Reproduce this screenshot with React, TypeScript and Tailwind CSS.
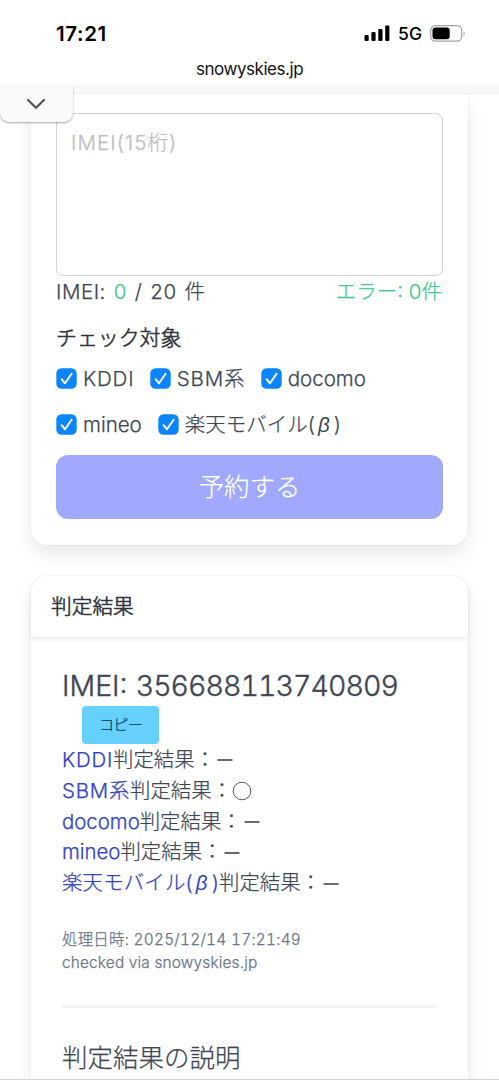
import type { ReactNode } from "react";

function StatusBar() {
  return (
    <div className="flex h-[54px] items-end justify-between pr-[33px] pl-[56px]">
      <span className="h-[32px] font-[Inter] text-[20.5px] leading-[24px] font-semibold tracking-[0.6px] text-black">17:21</span>
      <div className="flex h-[32px] items-start">
        <svg className="mt-[3px] mr-[8px]" width="26" height="17" viewBox="0 0 26 17" fill="#000">
          <rect x="0.5" y="10" width="4.2" height="6" rx="1.1" />
          <rect x="7.4" y="7" width="4.2" height="9" rx="1.1" />
          <rect x="14.3" y="4" width="4.2" height="12" rx="1.1" />
          <rect x="21.2" y="0.5" width="4.2" height="15.5" rx="1.1" />
        </svg>
        <span className="mr-[8px] font-[Inter] text-[17.5px] leading-[24px] font-medium text-black">5G</span>
        <svg className="mt-[3px]" width="36" height="17" viewBox="0 0 36 17" fill="none">
          <rect x="0.7" y="0.7" width="31" height="15.4" rx="4.6" stroke="#a3a3a3" strokeWidth="1.2" />
          <rect x="2.5" y="2.5" width="17.2" height="11.8" rx="3" fill="#000" />
          <path d="M33.6 6v5c1.3-.5 1.3-4.5 0-5Z" fill="#999" />
        </svg>
      </div>
    </div>
  );
}

function Check({ children, className = "" }: { children: ReactNode; className?: string }) {
  return (
    <label className="flex items-center">
      <svg className="mr-[6px]" width="21" height="21" viewBox="0 0 21 21" fill="none">
        <rect x="0.3" y="0.3" width="20.4" height="20.4" rx="5.3" fill="#0a84ff" />
        <path d="m5.6 11.2 3.4 4.1 6.6-9.6" stroke="#fff" strokeWidth="2" strokeLinecap="round" strokeLinejoin="round" />
      </svg>
      <span className={className}>{children}</span>
    </label>
  );
}

function Result({ name, mark, nameClass = "" }: { name: ReactNode; mark: ReactNode; nameClass?: string }) {
  return (
    <div className="flex h-[30.8px] items-center text-[20.4px] leading-[30.8px] whitespace-nowrap">
      <span className={`text-[#3142c4] ${nameClass}`}>{name}</span>
      <span>判定結果：</span>
      {mark}
    </div>
  );
}

const dash = (
  <svg className="ml-[2px]" width="16" height="4" viewBox="0 0 16 4">
    <path d="M0.5 2h15" stroke="#404654" strokeWidth="1.6" />
  </svg>
);
const circle = (
  <svg width="20" height="20" viewBox="0 0 20 20">
    <circle cx="10" cy="10" r="8.8" fill="none" stroke="#555a66" strokeWidth="1" />
  </svg>
);
const beta = <i className="pr-[4px] pl-[3px] font-['Liberation_Sans'] [-webkit-text-stroke:0]">β</i>;

export default function App() {
  return (
    <div className="relative flex h-[1080px] w-[499px] flex-col overflow-hidden bg-white font-['Inter','Noto_Sans_CJK_JP',sans-serif] font-light text-[#404654] [-webkit-text-stroke:0.25px]">
      <header className="h-[85px] shrink-0 bg-white [-webkit-text-stroke:0]">
        <StatusBar />
        <div className="pt-[3px] text-center font-[Inter] text-[17px] leading-[24px] font-normal tracking-[-0.45px] text-[#111]">snowyskies.jp</div>
      </header>
      <div className="relative z-10 h-[8px] shrink-0 bg-[#f8f8f8] shadow-[0_1px_2px_rgba(0,0,0,0.08)]">
        <div className="absolute top-0 left-0 flex h-[37px] w-[73px] items-center justify-center rounded-b-[9px] bg-[#fafafa] shadow-[0_1px_2px_rgba(0,0,0,0.35)]">
          <svg className="-ml-[2px]" width="20" height="12" viewBox="0 0 20 12" fill="none">
            <path d="m2 2 8 7.8L18 2" stroke="#555" strokeWidth="2.3" strokeLinecap="round" strokeLinejoin="round" />
          </svg>
        </div>
      </div>

      <main className="flex flex-col px-[31px]">
        <section className="h-[452px] shrink-0 rounded-b-[16px] bg-white px-[25px] pt-[20px] shadow-[0_10px_20px_-2px_rgba(10,10,10,0.1),0_0_0_1px_rgba(10,10,10,0.02)]">
          <div className="h-[163px] w-[387px] rounded-[7px] border border-[#d2d3d6] px-[14px] pt-[13px] text-[20.5px] leading-[31px] tracking-[1.1px] text-[#bdbdbf]">IMEI(15桁)</div>
          <div className="flex h-[31px] w-[386px] justify-between text-[20.5px] leading-[31px]">
            <span className="tracking-[0.55px] [word-spacing:1.5px]">IMEI: <span className="text-[#48c78e]">0</span> / 20 件</span>
            <span className="text-[#48c78e]">エラー: 0件</span>
          </div>
          <div className="mt-[15px] h-[31px] text-[20.9px] leading-[31px] text-[#2e333d] [-webkit-text-stroke:0.6px]">チェック対象</div>
          <div className="mt-[10px] flex h-[31px] gap-[15.5px] text-[20.5px] leading-[31px]">
            <Check className="tracking-[0.8px]">KDDI</Check>
            <Check className="tracking-[0.8px]">SBM系</Check>
            <Check>docomo</Check>
          </div>
          <div className="mt-[15px] flex h-[31px] gap-[16px] text-[20.5px] leading-[31px]">
            <Check>mineo</Check>
            <Check>楽天モバイル({beta})</Check>
          </div>
          <button className="mt-[15px] block h-[64px] w-[387px] rounded-[12px] bg-[#a0a9fd] text-[25.4px] leading-[62px] text-white">予約する</button>
        </section>

        <section className="mt-[31px] h-[600px] shrink-0 rounded-[16px] bg-white shadow-[0_10px_20px_-2px_rgba(10,10,10,0.1),0_0_0_1px_rgba(10,10,10,0.02)]">
          <div className="h-[61px] rounded-t-[16px] px-[20px] text-[20.7px] leading-[61px] text-[#2e333d] shadow-[0_2px_4px_rgba(10,10,10,0.1)] [-webkit-text-stroke:0.6px]">判定結果</div>
          <div className="px-[31px] pt-[26px]">
            <div className="h-[43px] text-[28.5px] leading-[46px] whitespace-nowrap [-webkit-text-stroke:0.4px]">
              IMEI: <span className="tracking-[-0.95px] tabular-nums">356688113740809</span>
            </div>
            <button className="mb-px ml-[20px] block h-[38px] w-[77px] rounded-[4px] bg-[#66d1ff] text-[15.2px] leading-[36px] tracking-[-0.9px] text-[#004766]">コピー</button>
            <Result name="KDDI" mark={dash} nameClass="tracking-[0.8px]" />
            <Result name="SBM系" mark={circle} nameClass="tracking-[0.8px]" />
            <Result name="docomo" mark={dash} />
            <Result name="mineo" mark={dash} />
            <Result name={<>楽天モバイル({beta})</>} mark={dash} nameClass="tracking-[0.2px]" />
            <div className="mt-[29px] text-[15.4px] leading-[23px] text-[#69748c]">
              <div className="tracking-[0.27px] tabular-nums">処理日時: 2025/12/14 17:21:49</div>
              <div className="tracking-[0.17px]">checked via snowyskies.jp</div>
            </div>
            <hr className="mt-[31px] h-[3px] border-0 bg-[#f2f3f5]" />
            <h2 className="mt-[29px] text-[25.5px] leading-[42px]">判定結果の説明</h2>
          </div>
        </section>
      </main>
      <div className="absolute bottom-0 left-0 h-px w-full bg-[#d4d4d4]" />
    </div>
  );
}
